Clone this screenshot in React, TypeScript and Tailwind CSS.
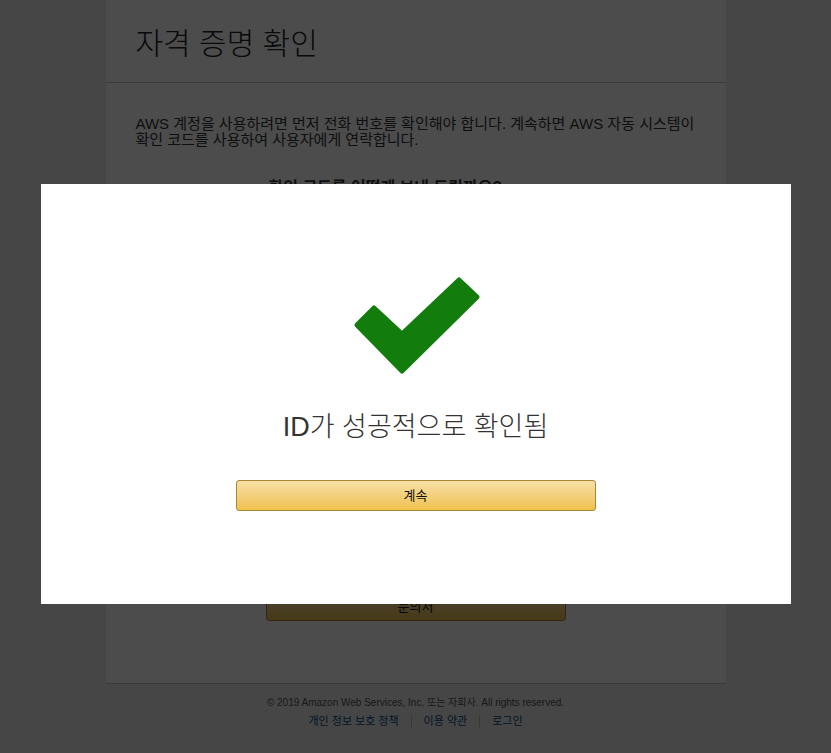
import React from 'react';

const font = { fontFamily: '"Liberation Sans", "Noto Sans CJK KR", sans-serif' };

const CheckMark: React.FC = () => (
  <svg width="130" height="100" viewBox="351 276 130 100" className="block">
    <polygon
      points="357,325 374,308 402,334 459,280 477,297 402,371"
      fill="#127c0c"
      stroke="#127c0c"
      strokeWidth="5"
      strokeLinejoin="round"
    />
  </svg>
);

const App: React.FC = () => {
  return (
    <div className="min-h-[753px] bg-[#e9e9e9] text-[#333]" style={font}>
      {/* page underneath the dialog */}
      <div className="mx-auto w-[620px] bg-white">
        <header className="h-[83px] border-b border-[#c4c4c4] px-[30px] pt-[24px]">
          <h1 className="text-[30px] font-light leading-[40px] text-[#222]">자격 증명 확인</h1>
        </header>
        <div className="h-[601px] border-b border-[#c4c4c4] px-[30px] pt-[33px]">
          <p className="text-[15px] leading-[16px]">
            AWS 계정을 사용하려면 먼저 전화 번호를 확인해야 합니다. 계속하면 AWS 자동 시스템이 확인 코드를 사용하여 사용자에게 연락합니다.
          </p>
          <div className="h-[444px] pt-[28px]">
            <h2 className="pl-[133px] text-[16px] font-bold">확인 코드를 어떻게 보내 드릴까요?</h2>
            <div className="mt-[20px] flex flex-col items-center gap-3 text-[14px]">
              <div>문자 메시지(SMS)</div>
              <div>음성 통화</div>
              <div className="h-[30px] w-[300px] border border-[#aaa]" />
              <div className="h-[30px] w-[300px] border border-[#aaa]" />
              <div className="h-[70px] w-[300px] border border-[#aaa]" />
            </div>
          </div>
          <div className="flex justify-center">
            <button className="h-[29px] w-[300px] rounded-[3px] border border-[#a88734] bg-gradient-to-b from-[#f7dfa5] to-[#f0c14b] text-[13px] text-[#111]">
              문의처
            </button>
          </div>
        </div>
      </div>
      <footer className="flex flex-col items-center pt-[12px]">
        <div className="text-[10px] leading-[14px] text-[#555]">© 2019 Amazon Web Services, Inc. 또는 자회사. All rights reserved.</div>
        <div className="mt-[4px] flex items-center text-[11px] leading-[14px] text-[#0a4c80]">
          <span className="px-[12px]">개인 정보 보호 정책</span>
          <span className="h-[12px] w-px bg-[#bbb]" />
          <span className="px-[12px]">이용 약관</span>
          <span className="h-[12px] w-px bg-[#bbb]" />
          <span className="px-[12px]">로그인</span>
        </div>
      </footer>

      {/* dark backdrop and dialog */}
      <div className="fixed inset-0 flex items-start justify-center bg-black/70 pt-[184px]">
        <div className="flex h-[420px] w-[750px] flex-col items-center bg-white pt-[92px]">
          <CheckMark />
          <h2 className="mt-[35px] text-[27px] font-light leading-[32px] text-[#333]">ID가 성공적으로 확인됨</h2>
          <button className="mt-[37px] h-[31px] w-[360px] rounded-[3px] border border-[#a88734] bg-gradient-to-b from-[#f7dfa5] to-[#f0c14b] text-[13px] text-[#111]">
            계속
          </button>
        </div>
      </div>
    </div>
  );
};

export default App;
